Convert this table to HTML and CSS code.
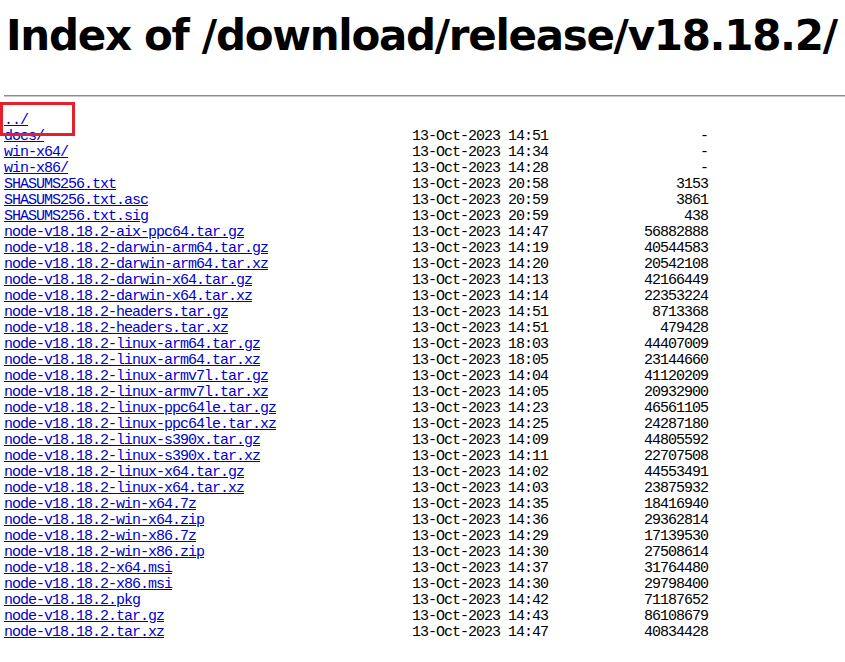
FILE: index.html
```html
<!DOCTYPE html>
<html>
<head>
    <meta charset="UTF-8">
    <title>Index of /download/release/v18.18.2/</title>
    <link rel="stylesheet" href="styles.css">
</head>
<body>
    <h1 class="title">Index of /download/release/v18.18.2/</h1>
    <hr class="rule">
    <div class="listing">
        <div class="row"><a href="../">../</a></div>
        <div class="row"><a href="docs/">docs/</a><span class="date">13-Oct-2023 14:51</span><span class="size">-</span></div>
        <div class="row"><a href="win-x64/">win-x64/</a><span class="date">13-Oct-2023 14:34</span><span class="size">-</span></div>
        <div class="row"><a href="win-x86/">win-x86/</a><span class="date">13-Oct-2023 14:28</span><span class="size">-</span></div>
        <div class="row"><a href="SHASUMS256.txt">SHASUMS256.txt</a><span class="date">13-Oct-2023 20:58</span><span class="size">3153</span></div>
        <div class="row"><a href="SHASUMS256.txt.asc">SHASUMS256.txt.asc</a><span class="date">13-Oct-2023 20:59</span><span class="size">3861</span></div>
        <div class="row"><a href="SHASUMS256.txt.sig">SHASUMS256.txt.sig</a><span class="date">13-Oct-2023 20:59</span><span class="size">438</span></div>
        <div class="row"><a href="#">node-v18.18.2-aix-ppc64.tar.gz</a><span class="date">13-Oct-2023 14:47</span><span class="size">56882888</span></div>
        <div class="row"><a href="#">node-v18.18.2-darwin-arm64.tar.gz</a><span class="date">13-Oct-2023 14:19</span><span class="size">40544583</span></div>
        <div class="row"><a href="#">node-v18.18.2-darwin-arm64.tar.xz</a><span class="date">13-Oct-2023 14:20</span><span class="size">20542108</span></div>
        <div class="row"><a href="#">node-v18.18.2-darwin-x64.tar.gz</a><span class="date">13-Oct-2023 14:13</span><span class="size">42166449</span></div>
        <div class="row"><a href="#">node-v18.18.2-darwin-x64.tar.xz</a><span class="date">13-Oct-2023 14:14</span><span class="size">22353224</span></div>
        <div class="row"><a href="#">node-v18.18.2-headers.tar.gz</a><span class="date">13-Oct-2023 14:51</span><span class="size">8713368</span></div>
        <div class="row"><a href="#">node-v18.18.2-headers.tar.xz</a><span class="date">13-Oct-2023 14:51</span><span class="size">479428</span></div>
        <div class="row"><a href="#">node-v18.18.2-linux-arm64.tar.gz</a><span class="date">13-Oct-2023 18:03</span><span class="size">44407009</span></div>
        <div class="row"><a href="#">node-v18.18.2-linux-arm64.tar.xz</a><span class="date">13-Oct-2023 18:05</span><span class="size">23144660</span></div>
        <div class="row"><a href="#">node-v18.18.2-linux-armv7l.tar.gz</a><span class="date">13-Oct-2023 14:04</span><span class="size">41120209</span></div>
        <div class="row"><a href="#">node-v18.18.2-linux-armv7l.tar.xz</a><span class="date">13-Oct-2023 14:05</span><span class="size">20932900</span></div>
        <div class="row"><a href="#">node-v18.18.2-linux-ppc64le.tar.gz</a><span class="date">13-Oct-2023 14:23</span><span class="size">46561105</span></div>
        <div class="row"><a href="#">node-v18.18.2-linux-ppc64le.tar.xz</a><span class="date">13-Oct-2023 14:25</span><span class="size">24287180</span></div>
        <div class="row"><a href="#">node-v18.18.2-linux-s390x.tar.gz</a><span class="date">13-Oct-2023 14:09</span><span class="size">44805592</span></div>
        <div class="row"><a href="#">node-v18.18.2-linux-s390x.tar.xz</a><span class="date">13-Oct-2023 14:11</span><span class="size">22707508</span></div>
        <div class="row"><a href="#">node-v18.18.2-linux-x64.tar.gz</a><span class="date">13-Oct-2023 14:02</span><span class="size">44553491</span></div>
        <div class="row"><a href="#">node-v18.18.2-linux-x64.tar.xz</a><span class="date">13-Oct-2023 14:03</span><span class="size">23875932</span></div>
        <div class="row"><a href="#">node-v18.18.2-win-x64.7z</a><span class="date">13-Oct-2023 14:35</span><span class="size">18416940</span></div>
        <div class="row"><a href="#">node-v18.18.2-win-x64.zip</a><span class="date">13-Oct-2023 14:36</span><span class="size">29362814</span></div>
        <div class="row"><a href="#">node-v18.18.2-win-x86.7z</a><span class="date">13-Oct-2023 14:29</span><span class="size">17139530</span></div>
        <div class="row"><a href="#">node-v18.18.2-win-x86.zip</a><span class="date">13-Oct-2023 14:30</span><span class="size">27508614</span></div>
        <div class="row"><a href="#">node-v18.18.2-x64.msi</a><span class="date">13-Oct-2023 14:37</span><span class="size">31764480</span></div>
        <div class="row"><a href="#">node-v18.18.2-x86.msi</a><span class="date">13-Oct-2023 14:30</span><span class="size">29798400</span></div>
        <div class="row"><a href="#">node-v18.18.2.pkg</a><span class="date">13-Oct-2023 14:42</span><span class="size">71187652</span></div>
        <div class="row"><a href="#">node-v18.18.2.tar.gz</a><span class="date">13-Oct-2023 14:43</span><span class="size">86108679</span></div>
        <div class="row"><a href="#">node-v18.18.2.tar.xz</a><span class="date">13-Oct-2023 14:47</span><span class="size">40834428</span></div>
    </div>
    <hr class="rule">
    <div class="mark"></div>
</body>
</html>
```

FILE: styles.css
```css
body {
    margin: 0 0 0 4px;
    background-color: #fff;
    color: #000;
}

.title {
    margin: 10px 0 0 2px;
    font-family: "DejaVu Sans", sans-serif;
    font-weight: bold;
    font-size: 42px;
    letter-spacing: -1.3px;
    line-height: 52px;
    white-space: nowrap;
}

.rule {
    margin: 33px 0 0 0;
    border: none;
    border-top: 1px solid #8c8c8c;
    border-bottom: 1px solid #c8c8c8;
}

.listing {
    margin: 16px 0 15px 0;
    font-family: "Liberation Mono", monospace;
    font-size: 15px;
    letter-spacing: -1px;
    line-height: 16px;
}

.row {
    display: grid;
    grid-template-columns: 408px 136px 160px;
    height: 16px;
    white-space: nowrap;
}

.row a {
    color: #0000cc;
    justify-self: start;
}

.size {
    text-align: right;
}

.mark {
    position: absolute;
    left: 0;
    top: 102px;
    width: 69px;
    height: 28px;
    border: 3px solid #e5202b;
}
```
